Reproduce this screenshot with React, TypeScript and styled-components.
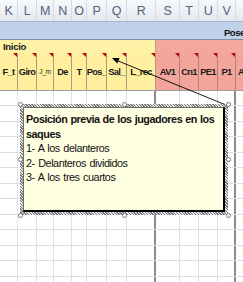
import styled, { createGlobalStyle } from "styled-components";

const GlobalStyle = createGlobalStyle`
  html, body {
    margin: 0;
    padding: 0;
    background: #ffffff;
    overflow: hidden;
  }
`;

const SANS = `"Liberation Sans", Arial, sans-serif`;

// columnas visibles K..W
const cols = [
  { letter: "K", w: 18, label: "F_t" },
  { letter: "L", w: 19, label: "Giro" },
  { letter: "M", w: 17, label: "J_m", small: true },
  { letter: "N", w: 18, label: "De" },
  { letter: "O", w: 15, label: "T" },
  { letter: "P", w: 20, label: "Pos_" },
  { letter: "Q", w: 20, label: "Sal_" },
  { letter: "R", w: 29, label: "L_rec" },
  { letter: "S", w: 24, label: "AV1" },
  { letter: "T", w: 19, label: "Cn1" },
  { letter: "U", w: 19, label: "PE1" },
  { letter: "V", w: 18, label: "P1" },
  { letter: "W", w: 30, label: "A", left: true },
];

const template = cols.map((c) => c.w + "px").join(" ");
const dataRows = Array.from({ length: 13 });

const Sheet = styled.div`
  position: relative;
  width: 243px;
  height: 282px;
  overflow: hidden;
  background: #ffffff;
  font-family: ${SANS};
`;

const Grid = styled.div`
  display: grid;
  grid-template-columns: ${template};
  width: 266px;
`;

const ColHeaders = styled(Grid)`
  height: 22px;
  background: linear-gradient(#f7f9fb, #e4e9f0);
  border-bottom: 1px solid #9eb6ce;
  box-sizing: border-box;
`;

const ColLetter = styled.div`
  display: flex;
  align-items: center;
  justify-content: center;
  border-right: 1px solid #d5dce6;
  color: #56627a;
  font-size: 12.5px;
  letter-spacing: -0.3px;
`;

const Band = styled.div`
  height: 18px;
  background: #c0d1ea;
  display: flex;
  align-items: center;
  padding-left: 224px;
  box-sizing: border-box;
  border-bottom: 1px solid #7f8fa6;
  white-space: nowrap;
`;

const BandText = styled.span`
  font-weight: bold;
  font-size: 9.5px;
  letter-spacing: -0.5px;
  color: #111;
  padding-top: 3px;
`;

const SectionRow = styled.div`
  display: grid;
  grid-template-columns: 156px 110px;
  height: 13px;
`;

const Section = styled.div<{ $tone: "yellow" | "salmon" }>`
  background: ${(p) => (p.$tone === "yellow" ? "#fff1a6" : "#f3a79d")};
  border-right: 1px solid ${(p) => (p.$tone === "yellow" ? "#b7ab6c" : "#b8807a")};
  font-size: 9.5px;
  font-weight: bold;
  letter-spacing: -0.3px;
  color: #1a1a1a;
  padding-left: 3px;
  line-height: 13px;
`;

const LabelRow = styled(Grid)`
  height: 38px;
  border-bottom: 1px solid #9c9c9c;
  box-sizing: border-box;
`;

const LabelCell = styled.div<{ $tone: "yellow" | "salmon"; $small?: boolean; $left?: boolean }>`
  position: relative;
  display: flex;
  align-items: center;
  justify-content: ${(p) => (p.$left ? "flex-start" : "center")};
  padding-left: ${(p) => (p.$left ? "2px" : "0")};
  background: ${(p) => (p.$tone === "yellow" ? "#ffef9f" : "#f3a59b")};
  border-right: 1px solid ${(p) => (p.$tone === "yellow" ? "#a8a07a" : "#b08079")};
  color: #1a1a1a;
  font-size: ${(p) => (p.$small ? "6.5px" : "9.3px")};
  font-weight: ${(p) => (p.$small ? "normal" : "bold")};
  letter-spacing: ${(p) => (p.$small ? "-0.2px" : "-0.7px")};
  white-space: nowrap;
  overflow: hidden;
  &::after {
    content: "";
    position: absolute;
    top: 0;
    right: 0;
    border-top: 4px solid #c00000;
    border-left: 4px solid transparent;
  }
`;

const DataRow = styled(Grid)<{ $tall?: boolean }>`
  height: ${(p) => (p.$tall ? "16px" : "15px")};
  border-bottom: 1px solid #d8dde6;
  box-sizing: border-box;
`;

const DataCell = styled.div<{ $strong?: boolean }>`
  border-right: ${(p) => (p.$strong ? "2px solid #8c8c8c" : "1px solid #dde2ea")};
`;

const Arrow = styled.svg`
  position: absolute;
  left: 0;
  top: 0;
  pointer-events: none;
`;

const CommentFrame = styled.div`
  position: absolute;
  left: 20px;
  top: 104px;
  width: 208px;
  height: 111px;
  box-sizing: border-box;
  padding: 3px;
  background: repeating-linear-gradient(45deg, #7a7a7a 0 1px, #e6e6e6 1px 2px);
`;

const CommentBody = styled.div`
  height: 100%;
  box-sizing: border-box;
  background: #ffffe1;
  border-left: 1px solid #6c6c6c;
  border-top: 1px solid #6c6c6c;
  border-right: 2px solid #000;
  border-bottom: 2px solid #000;
  padding: 4px 4px 0 2px;
  font-family: ${SANS};
  font-size: 10.8px;
  letter-spacing: -0.45px;
  word-spacing: 1px;
  line-height: 14.5px;
  color: #111;
`;

const CommentTitle = styled.div`
  font-weight: bold;
  word-spacing: 0.5px;
`;

const Handle = styled.span<{ $x: string; $y: string }>`
  position: absolute;
  left: ${(p) => p.$x};
  top: ${(p) => p.$y};
  width: 5px;
  height: 5px;
  margin: -2.5px 0 0 -2.5px;
  border-radius: 50%;
  background: #ffffff;
  border: 1px solid #777;
  box-sizing: border-box;
`;

const handles = [
  ["0%", "0%"], ["50%", "0%"], ["100%", "0%"],
  ["0%", "50%"], ["100%", "50%"],
  ["0%", "100%"], ["50%", "100%"], ["100%", "100%"],
];

export default function App() {
  return (
    <>
      <GlobalStyle />
      <Sheet>
        <ColHeaders>
          {cols.map((c) => (
            <ColLetter key={c.letter}>{c.letter}</ColLetter>
          ))}
        </ColHeaders>
        <Band>
          <BandText>Pose</BandText>
        </Band>
        <SectionRow>
          <Section $tone="yellow">Inicio</Section>
          <Section $tone="salmon" />
        </SectionRow>
        <LabelRow>
          {cols.map((c, i) => (
            <LabelCell
              key={c.letter}
              $tone={i < 8 ? "yellow" : "salmon"}
              $small={c.small}
              $left={c.left}
            >
              {c.label}
            </LabelCell>
          ))}
        </LabelRow>
        {dataRows.map((_, r) => (
          <DataRow key={r} $tall={r % 2 === 1}>
            {cols.map((c, i) => (
              <DataCell key={c.letter} $strong={i === 7 || i === 11} />
            ))}
          </DataRow>
        ))}

        <Arrow width="243" height="282" viewBox="0 0 243 282">
          <line x1="117" y1="60.5" x2="226" y2="105" stroke="#000" strokeWidth="0.9" />
          <polygon points="112,58 119.6,57.9 117.3,63.5" fill="#000" />
        </Arrow>

        <CommentFrame>
          <CommentBody>
            <CommentTitle>Posición previa de los jugadores en los saques</CommentTitle>
            <div>1- A los delanteros</div>
            <div>2- Delanteros divididos</div>
            <div>3- A los tres cuartos</div>
          </CommentBody>
          {handles.map(([x, y]) => (
            <Handle key={x + y} $x={x} $y={y} />
          ))}
        </CommentFrame>
      </Sheet>
    </>
  );
}
